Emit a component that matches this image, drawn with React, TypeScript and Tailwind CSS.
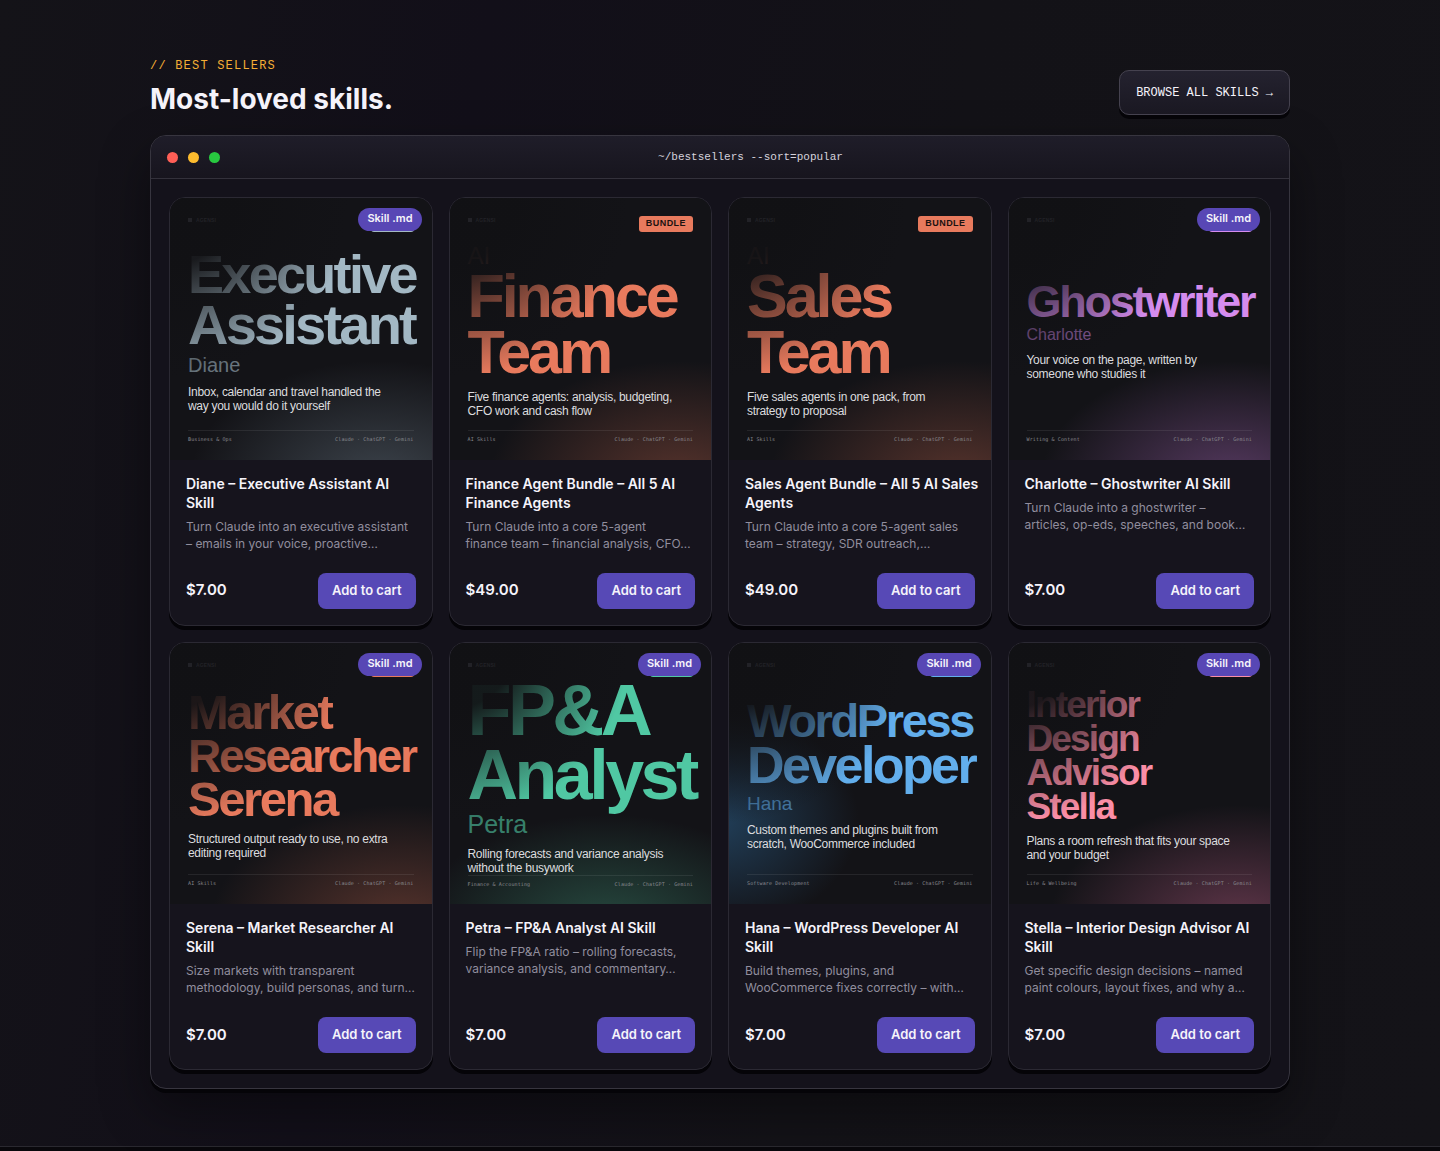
import { clsx } from 'clsx';

type Line = { text: string; className: string };

type Skill = {
  title: string;
  description: string;
  price: string;
  bundle?: boolean;
  accent: string;
  chip: string;
  glow: string;
  kicker?: string;
  lines: Line[];
  name?: Line;
  tagline: string;
  category: string;
};

const glowCorner = {
  slate: 'bg-[radial-gradient(ellipse_190px_120px_at_80%_108%,#3c434b,transparent)]',
  orange: 'bg-[radial-gradient(ellipse_190px_120px_at_88%_108%,#56332c,transparent)]',
  violet: 'bg-[radial-gradient(ellipse_190px_120px_at_85%_108%,#55395f,transparent)]',
  green: 'bg-[radial-gradient(ellipse_190px_110px_at_60%_108%,#26493f,transparent)]',
  blue: 'bg-[radial-gradient(ellipse_140px_110px_at_-4%_68%,#213e58,transparent)]',
  pink: 'bg-[radial-gradient(ellipse_190px_120px_at_88%_108%,#60364a,transparent)]',
};

const skills: Skill[] = [
  {
    title: 'Diane – Executive Assistant AI\nSkill',
    description: 'Turn Claude into an executive assistant – emails in your voice, proactive…',
    price: '$7.00',
    accent: 'text-[#a3b8c4]',
    chip: 'bg-[#a3b8c4]',
    glow: glowCorner.slate,
    lines: [
      { text: 'Executive', className: 'text-[54px] leading-[50px]' },
      { text: 'Assistant', className: 'text-[56px] leading-[51px]' },
    ],
    name: { text: 'Diane', className: 'text-[20px] leading-[20px]' },
    tagline: 'Inbox, calendar and travel handled the way you would do it yourself',
    category: 'Business & Ops',
  },
  {
    title: 'Finance Agent Bundle – All 5 AI Finance Agents',
    description: 'Turn Claude into a core 5-agent\nfinance team – financial analysis, CFO…',
    price: '$49.00',
    bundle: true,
    accent: 'text-[#e87a5d]',
    chip: 'bg-[#e87a5d]',
    glow: glowCorner.orange,
    kicker: 'AI',
    lines: [
      { text: 'Finance', className: 'text-[61px] leading-[56px]' },
      { text: 'Team', className: 'text-[61px] leading-[56px]' },
    ],
    tagline: 'Five finance agents: analysis, budgeting, CFO work and cash flow',
    category: 'AI Skills',
  },
  {
    title: 'Sales Agent Bundle – All 5 AI Sales Agents',
    description: 'Turn Claude into a core 5-agent sales team – strategy, SDR outreach,…',
    price: '$49.00',
    bundle: true,
    accent: 'text-[#e87a5d]',
    chip: 'bg-[#e87a5d]',
    glow: glowCorner.orange,
    kicker: 'AI',
    lines: [
      { text: 'Sales', className: 'text-[61px] leading-[56px]' },
      { text: 'Team', className: 'text-[61px] leading-[56px]' },
    ],
    tagline: 'Five sales agents in one pack, from strategy to proposal',
    category: 'AI Skills',
  },
  {
    title: 'Charlotte – Ghostwriter AI Skill',
    description: 'Turn Claude into a ghostwriter –\narticles, op-eds, speeches, and book…',
    price: '$7.00',
    accent: 'text-[#d58cee]',
    chip: 'bg-[#d58cee]',
    glow: glowCorner.violet,
    lines: [{ text: 'Ghostwriter', className: 'text-[45px] leading-[41px]' }],
    name: { text: 'Charlotte', className: 'text-[16px] leading-[16px]' },
    tagline: 'Your voice on the page, written by someone who studies it',
    category: 'Writing & Content',
  },
  {
    title: 'Serena – Market Researcher AI\nSkill',
    description: 'Size markets with transparent methodology, build personas, and turn…',
    price: '$7.00',
    accent: 'text-[#e87a5d]',
    chip: 'bg-[#e87a5d]',
    glow: glowCorner.orange,
    lines: [
      { text: 'Market', className: 'text-[49px] leading-[45px]' },
      { text: 'Researcher', className: 'text-[46px] leading-[42px]' },
      { text: 'Serena', className: 'text-[49px] leading-[45px]' },
    ],
    tagline: 'Structured output ready to use, no extra editing required',
    category: 'AI Skills',
  },
  {
    title: 'Petra – FP&A Analyst AI Skill',
    description: 'Flip the FP&A ratio – rolling forecasts, variance analysis, and commentary…',
    price: '$7.00',
    accent: 'text-[#50c8a3]',
    chip: 'bg-[#50c8a3]',
    glow: glowCorner.green,
    lines: [
      { text: 'FP&A', className: 'text-[72px] leading-[66px]' },
      { text: 'Analyst', className: 'text-[70px] leading-[64px]' },
    ],
    name: { text: 'Petra', className: 'text-[25px] leading-[25px]' },
    tagline: 'Rolling forecasts and variance analysis without the busywork',
    category: 'Finance & Accounting',
  },
  {
    title: 'Hana – WordPress Developer AI\nSkill',
    description: 'Build themes, plugins, and WooCommerce fixes correctly – with…',
    price: '$7.00',
    accent: 'text-[#62aeec]',
    chip: 'bg-[#62aeec]',
    glow: glowCorner.blue,
    lines: [
      { text: 'WordPress', className: 'text-[47px] leading-[43px]' },
      { text: 'Developer', className: 'text-[52px] leading-[47px]' },
    ],
    name: { text: 'Hana', className: 'text-[19px] leading-[19px]' },
    tagline: 'Custom themes and plugins built from scratch, WooCommerce included',
    category: 'Software Development',
  },
  {
    title: 'Stella – Interior Design Advisor AI\nSkill',
    description: 'Get specific design decisions – named paint colours, layout fixes, and why a…',
    price: '$7.00',
    accent: 'text-[#fb8ea6]',
    chip: 'bg-[#fb8ea6]',
    glow: glowCorner.pink,
    lines: [
      { text: 'Interior', className: 'text-[37px] leading-[34px]' },
      { text: 'Design', className: 'text-[37px] leading-[34px]' },
      { text: 'Advisor', className: 'text-[37px] leading-[34px]' },
      { text: 'Stella', className: 'text-[37px] leading-[34px]' },
    ],
    tagline: 'Plans a room refresh that fits your space and your budget',
    category: 'Life & Wellbeing',
  },
];

export default function App() {
  return (
    <div className="min-h-screen bg-[#09080c] font-['Inter',sans-serif] text-[#f5f3fa]">
      <section className="border-b border-[#2a2930] bg-[linear-gradient(100deg,#141318,#120f19_30%,#131217_60%,#141318)] px-6 pt-[58px] pb-[57px]">
        <div className="mx-auto w-full max-w-[1140px]">
          <div className="mb-5 flex items-end justify-between">
            <div>
              <p className="font-['Liberation_Mono',monospace] text-[12px] leading-[17px] tracking-widest text-[#f5ae35]">
                // BEST SELLERS
              </p>
              <h2 className="mt-2 text-[28px] leading-[32px] font-bold">Most-loved skills.</h2>
            </div>
            <a
              href="#skills"
              className="flex h-[45px] items-center rounded-[10px] border border-[#45424f] bg-linear-to-b from-[#24222f] to-[#1a1822] px-4 font-['Liberation_Mono',monospace] text-[12px] shadow-[0_4px_0_#050408]"
            >
              BROWSE ALL SKILLS →
            </a>
          </div>

          <div className="overflow-clip rounded-2xl border border-[#37353f] bg-[#14121b] shadow-[0_4px_0_#050408,0_20px_50px_rgba(0,0,0,0.4)]">
            <div className="grid h-[43px] grid-cols-[1fr_auto_1fr] items-center border-b border-[#33313b] bg-linear-to-b from-[#1f1d29] to-[#17151e] px-4">
              <div className="flex gap-2.5">
                <span className="size-[11px] rounded-full bg-[#ff5f57]" />
                <span className="size-[11px] rounded-full bg-[#febc2e]" />
                <span className="size-[11px] rounded-full bg-[#28c840]" />
              </div>
              <p className="pl-[61px] font-['Liberation_Mono',monospace] text-[11px] text-[#d5d2dc]">
                ~/bestsellers --sort=popular
              </p>
            </div>
            <div id="skills" className="grid grid-cols-4 gap-4 p-[18px]">
              {skills.map((skill) => (
                <SkillCard key={skill.title} skill={skill} />
              ))}
            </div>
          </div>
        </div>
      </section>
    </div>
  );
}

function SkillCard({ skill }: { skill: Skill }) {
  return (
    <article className="relative flex flex-col overflow-clip rounded-2xl border border-[#2b2933] bg-[#16141d] shadow-[0_4px_0_#050408]">
      <Cover skill={skill} />
      {!skill.bundle && (
        <span className="absolute top-2.5 right-2.5 flex h-[23px] items-center rounded-full bg-[#5847b5] px-[9px] pb-[2px] text-[11px] font-semibold">
          Skill .md
        </span>
      )}
      <div className="flex flex-1 flex-col px-4 pt-3.5 pb-4">
        <h3 className="-mr-2 text-[14px] leading-[19px] font-semibold whitespace-pre-line">{skill.title}</h3>
        <p className="mt-1.5 text-[12px] leading-[17px] whitespace-pre-line text-[#918e9d]">{skill.description}</p>
        <div className="mt-auto flex items-center justify-between pt-[21px]">
          <span className="text-[15px] font-semibold">{skill.price}</span>
          <button className="h-9 rounded-lg bg-[#5749b6] px-3.5 text-[13px] font-semibold">Add to cart</button>
        </div>
      </div>
    </article>
  );
}

function Cover({ skill }: { skill: Skill }) {
  return (
    <div className={clsx('relative flex aspect-square min-h-0 flex-col bg-[#131317] px-[18px] pt-[18px] pb-[17px]', "font-['Liberation_Sans',sans-serif]", skill.glow)}>
      <div className="flex h-4 items-start justify-between">
        <span className="relative z-10 flex items-center gap-1 text-[5px] leading-[8px] font-bold tracking-wide text-[#222227]">
          <span className="size-1 bg-[#222227]" />
          AGENSI
        </span>
        {skill.bundle ? (
          <span className={clsx('flex h-4 items-center rounded-[3px] px-[7px] text-[9px] font-bold tracking-wider text-[#1c1210]', skill.chip)}>
            BUNDLE
          </span>
        ) : (
          <span className={clsx('h-4 w-[43px] rounded-[3px]', skill.chip)} />
        )}
      </div>

      <div className="flex flex-1 flex-col justify-center">
        {skill.kicker && <p className="text-[24px] leading-[24px] text-[#8a5347]">{skill.kicker}</p>}
        {skill.lines.map((line) => (
          <p key={line.text} className={clsx('font-bold tracking-tighter whitespace-nowrap', line.className, skill.accent)}>
            {line.text}
          </p>
        ))}
        {skill.name && (
          <p className={clsx('mt-[5px] opacity-60', skill.name.className, skill.accent)}>{skill.name.text}</p>
        )}
        <p className="relative z-10 mt-2.5 max-w-[212px] text-[12px] leading-[14px] tracking-tight text-[#dcdcdf]">{skill.tagline}</p>
      </div>

      <div className="flex justify-between border-t border-white/8 pt-1 font-['DejaVu_Sans_Mono',monospace] text-[5px] leading-[8px] tracking-wide text-[#8a8a90]">
        <span>{skill.category}</span>
        <span>Claude · ChatGPT · Gemini</span>
      </div>

      {/* top-left vignette that the title fades out of */}
      <div className="pointer-events-none absolute inset-0 bg-[radial-gradient(circle_at_0_0,rgba(17,17,20,0.95)_66px,rgba(17,17,20,0.5)_118px,transparent_180px)]" />
    </div>
  );
}
